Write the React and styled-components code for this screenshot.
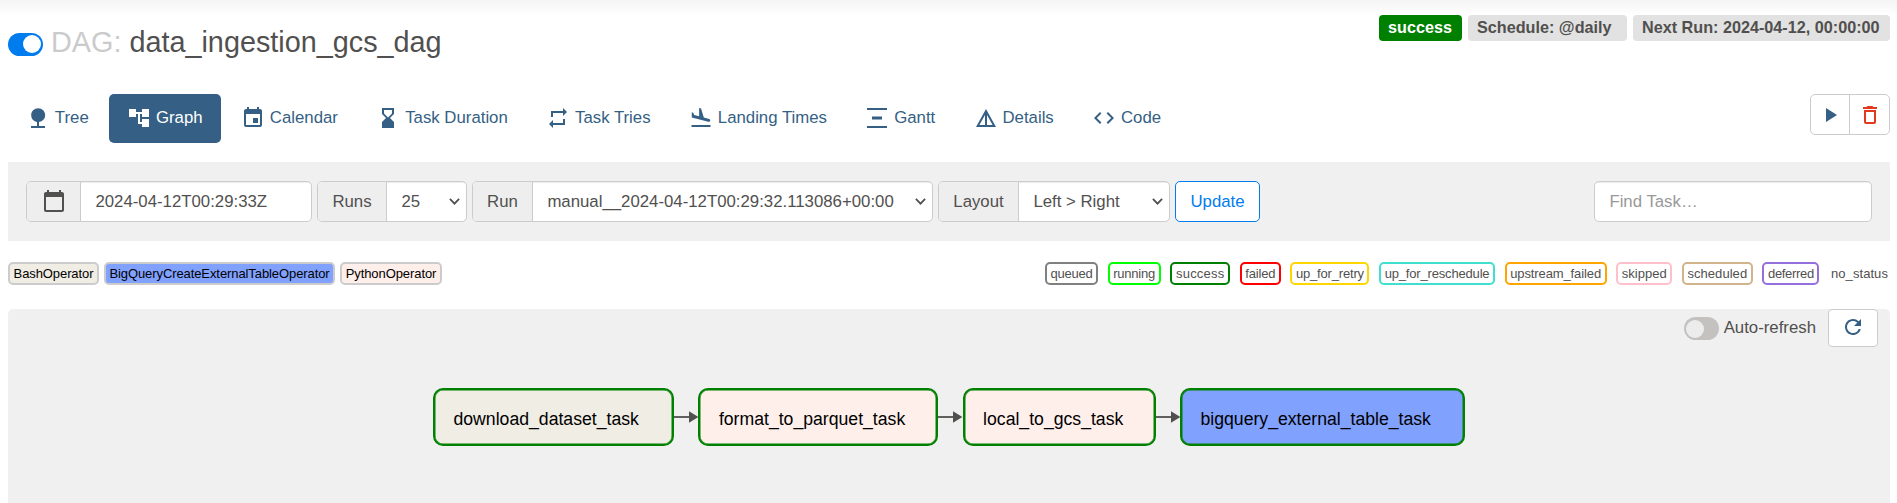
import React from "react";
import styled, { createGlobalStyle } from "styled-components";
import {
  MdNature, MdAccountTree, MdEvent, MdHourglassBottom, MdRepeat, MdFlightLand,
  MdVerticalDistribute, MdCode, MdPlayArrow, MdDeleteOutline, MdCalendarToday, MdRefresh,
} from "react-icons/md";

const Global = createGlobalStyle`
  *, *::before, *::after { box-sizing: border-box; }
  body {
    margin: 0;
    background: #fff;
    color: #51504f;
    font: 16.8px/24px "Liberation Sans", Arial, sans-serif;
    overflow: hidden;
  }
  svg { display: block; flex: none; }
`;

const Page = styled.div`
  height: 503px;
  padding: 0 7px 0 8px;
  display: flex;
  flex-direction: column;
  overflow: hidden;
  background: linear-gradient(#f4f4f4, #fff 15px);
`;

const Header = styled.header`
  display: flex;
  justify-content: space-between;
  height: 94px;
  padding-top: 15px;
`;

const Title = styled.h3`
  display: flex;
  align-items: center;
  height: 54px;
  margin: 0;
  font-size: 28.8px;
  line-height: 32px;
  font-weight: 400;
  white-space: pre;
`;

const Muted = styled.span`
  color: #cbcbcb;
`;

const Switch = styled.span`
  display: flex;
  align-items: center;
  justify-content: ${(p) => (p.$on ? "flex-end" : "flex-start")};
  width: 35px;
  height: 23px;
  padding: 0 2px;
  border-radius: 12px;
  background: ${(p) => (p.$on ? "#017cee" : "#c4c2c1")};
  &::after {
    content: "";
    width: 18px;
    height: 18px;
    border-radius: 50%;
    background: ${(p) => (p.$on ? "#fff" : "#edecec")};
  }
`;

const TitleSwitch = styled(Switch)`
  margin: 4px 8px 0 0;
`;

const Badges = styled.div`
  display: flex;
  gap: 6px;
  height: 26px;
`;

const Badge = styled.span`
  width: ${(p) => p.$w}px;
  padding: 0 9px;
  border-radius: 4px;
  font-weight: 700;
  font-size: 16.2px;
  line-height: 25px;
  white-space: nowrap;
  color: ${(p) => (p.$solid ? "#fff" : "#51504f")};
  background: ${(p) => (p.$solid ? "#008000" : "#e2e2e2")};
`;

const NavRow = styled.div`
  display: flex;
  justify-content: space-between;
  align-items: flex-start;
  height: 68px;
`;

const Tabs = styled.nav`
  display: flex;
  gap: 2.4px;
`;

const Tab = styled.a`
  display: flex;
  align-items: center;
  gap: 4.85px;
  height: 49px;
  padding: 0 18px;
  border-radius: 5px;
  white-space: nowrap;
  color: ${(p) => (p.$active ? "#fff" : "#355f84")};
  background: ${(p) => (p.$active ? "#355f84" : "transparent")};
  svg { margin-bottom: 1px; }
  span { margin-top: -2px; }
`;

const ButtonGroup = styled.div`
  display: flex;
  width: 80px;
  height: 41px;
  border: 1px solid #ccc;
  border-radius: 5px;
  background: #fff;
`;

const IconButton = styled.button`
  flex: 0 0 ${(p) => p.$w}px;
  display: flex;
  align-items: center;
  justify-content: center;
  padding: 0;
  border: 0;
  background: none;
  color: ${(p) => p.$color};
  & + & { border-left: 1px solid #ccc; }
`;

const Toolbar = styled.form`
  display: flex;
  align-items: center;
  gap: 5px;
  height: 79px;
  padding: 0 18px;
  background: #f0f0f0;
`;

const Group = styled.div`
  display: flex;
  width: ${(p) => p.$w}px;
  height: 41px;
  border: 1px solid #ccc;
  border-radius: 5px;
  overflow: hidden;
  background: #fff;
`;

const Addon = styled.label`
  flex: none;
  display: flex;
  align-items: center;
  justify-content: center;
  width: ${(p) => p.$w}px;
  border-right: 1px solid #ccc;
  background: #eee;
  svg { margin-bottom: 2px; }
`;

const Field = styled.div`
  flex: 1;
  display: flex;
  align-items: center;
  justify-content: space-between;
  padding: 0 6px 0 14.4px;
  box-shadow: inset 0 1px 1px rgba(0, 0, 0, 0.075);
  white-space: nowrap;
  color: ${(p) => (p.$placeholder ? "#999" : "#51504f")};
`;

const UpdateButton = styled.button`
  width: 85px;
  height: 41px;
  padding: 0;
  border: 1px solid #017cee;
  border-radius: 5px;
  background: #fff;
  color: #017cee;
  font: inherit;
`;

const Search = styled(Group)`
  margin-left: auto;
`;

const Legend = styled.div`
  display: flex;
  justify-content: space-between;
  height: 68px;
  padding: 21px 0 0;
`;

const LegendSet = styled.div`
  display: flex;
  gap: ${(p) => p.$gap}px;
`;

const Tag = styled.span`
  width: ${(p) => p.$w}px;
  height: 23px;
  border: 2px solid ${(p) => p.$border};
  border-radius: 5px;
  background: ${(p) => p.$fill || "#fff"};
  color: ${(p) => (p.$fill ? "#000" : "#51504f")};
  font-size: 13px;
  letter-spacing: ${(p) => p.$track}px;
  line-height: 19px;
  text-align: center;
  white-space: nowrap;
`;

const Canvas = styled.main`
  flex: 1;
  border-radius: 5px 5px 0 0;
  background: #f0f0f0;
`;

const Refresh = styled.div`
  display: flex;
  justify-content: flex-end;
  height: 79px;
  padding-right: 12px;
`;

const RefreshLabel = styled.span`
  margin: 7px 12px 0 5px;
`;

const RefreshSwitch = styled(Switch)`
  margin-top: 8px;
`;

const RefreshButton = styled.button`
  display: flex;
  align-items: center;
  justify-content: center;
  width: 50px;
  height: 38px;
  padding: 0 0 2px;
  border: 1px solid #ccc;
  border-radius: 4px;
  background: #fff;
  color: #355f84;
`;

const Flow = styled.div`
  display: flex;
  align-items: center;
  padding-left: 425px;
`;

const Node = styled.div`
  width: ${(p) => p.$w}px;
  height: 58px;
  padding-left: 18.5px;
  border: 2px solid #008000;
  border-radius: 10px;
  box-shadow: inset 0 0 0 0.5px #008000;
  background: ${(p) => p.$fill};
  color: #000;
  font-size: 17.65px;
  line-height: 58px;
  white-space: nowrap;
`;

const Chevron = () => (
  <svg width="11" height="7" viewBox="0 0 11 7" fill="none" stroke="#51504f" strokeWidth="1.8">
    <path d="M.9.9l4.6 4.7L10.100.9" />
  </svg>
);

const DetailsIcon = () => (
  <svg width="24" height="24" viewBox="0 0 24 24" fill="currentColor">
    <path d="M12 3L2 21h20L12 3zm1 5.92L18.6 19H13V8.92zm-2 0V19H5.4L11 8.92z" />
  </svg>
);

const Arrow = () => (
  <svg width="24.4" height="14" viewBox="0 0 24.4 14">
    <path d="M0 7h17" stroke="#51504f" strokeWidth="1.8" />
    <path d="M15 1.2L24.400 7l-9.400 5.800z" fill="#51504f" />
  </svg>
);

const tabs = [
  ["Tree", MdNature],
  ["Graph", MdAccountTree],
  ["Calendar", MdEvent],
  ["Task Duration", MdHourglassBottom],
  ["Task Tries", MdRepeat],
  ["Landing Times", MdFlightLand],
  ["Gantt", MdVerticalDistribute],
  ["Details", DetailsIcon],
  ["Code", MdCode],
];

const operators = [
  ["BashOperator", 91, "#f0ede4", -0.09],
  ["BigQueryCreateExternalTableOperator", 231, "#81a1ff", -0.09],
  ["PythonOperator", 102, "#ffefeb", -0.08],
];

const states = [
  ["queued", 53, "gray", -0.25],
  ["running", 53, "lime", -0.22],
  ["success", 60, "green", 0.24],
  ["failed", 41, "red", -0.18],
  ["up_for_retry", 79, "gold", -0.18],
  ["up_for_reschedule", 116, "turquoise", -0.17],
  ["upstream_failed", 102, "orange", -0.11],
  ["skipped", 56, "pink", 0],
  ["scheduled", 71, "tan", 0.05],
  ["deferred", 57, "mediumpurple", -0.32],
  ["no_status", 61, "transparent", 0.06],
];

const nodes = [
  ["download_dataset_task", 241, "#f0ede4"],
  ["format_to_parquet_task", 239.8, "#ffefeb"],
  ["local_to_gcs_task", 193, "#ffefeb"],
  ["bigquery_external_table_task", 285, "#81a1ff"],
];

export default function App() {
  return (
    <Page>
      <Global />
      <Header>
        <Title>
          <TitleSwitch $on />
          <Muted>DAG: </Muted>
          <span>data_ingestion_gcs_dag</span>
        </Title>
        <Badges>
          <Badge $solid $w={83}>success</Badge>
          <Badge $w={159}>Schedule: @daily</Badge>
          <Badge $w={257}>Next Run: 2024-04-12, 00:00:00</Badge>
        </Badges>
      </Header>

      <NavRow>
        <Tabs>
          {tabs.map(([label, Icon]) => (
            <Tab key={label} $active={label === "Graph"}>
              <Icon size={24} />
              <span>{label}</span>
            </Tab>
          ))}
        </Tabs>
        <ButtonGroup>
          <IconButton type="button" $w={38} $color="#355f84"><MdPlayArrow size={24} /></IconButton>
          <IconButton type="button" $w={40} $color="#e43921"><MdDeleteOutline size={24} /></IconButton>
        </ButtonGroup>
      </NavRow>

      <Toolbar>
        <Group $w={286}>
          <Addon $w={54}><MdCalendarToday size={24} /></Addon>
          <Field>2024-04-12T00:29:33Z</Field>
        </Group>
        <Group $w={150}>
          <Addon $w={69}>Runs</Addon>
          <Field>25<Chevron /></Field>
        </Group>
        <Group $w={461}>
          <Addon $w={60}>Run</Addon>
          <Field>manual__2024-04-12T00:29:32.113086+00:00<Chevron /></Field>
        </Group>
        <Group $w={232}>
          <Addon $w={80}>Layout</Addon>
          <Field>Left &gt; Right<Chevron /></Field>
        </Group>
        <UpdateButton type="button">Update</UpdateButton>
        <Search $w={278}>
          <Field $placeholder>Find Task…</Field>
        </Search>
      </Toolbar>

      <Legend>
        <LegendSet $gap={5}>
          {operators.map(([label, w, fill, track]) => (
            <Tag key={label} $w={w} $fill={fill} $border="#ccc" $track={track}>{label}</Tag>
          ))}
        </LegendSet>
        <LegendSet $gap={9.6}>
          {states.map(([label, w, border, track]) => (
            <Tag key={label} $w={w} $border={border} $track={track}>{label}</Tag>
          ))}
        </LegendSet>
      </Legend>

      <Canvas>
        <Refresh>
          <RefreshSwitch />
          <RefreshLabel>Auto-refresh</RefreshLabel>
          <RefreshButton type="button"><MdRefresh size={24} /></RefreshButton>
        </Refresh>
        <Flow>
          {nodes.map(([label, w, fill], i) => (
            <React.Fragment key={label}>
              {i > 0 && <Arrow />}
              <Node $w={w} $fill={fill}>{label}</Node>
            </React.Fragment>
          ))}
        </Flow>
      </Canvas>
    </Page>
  );
}
